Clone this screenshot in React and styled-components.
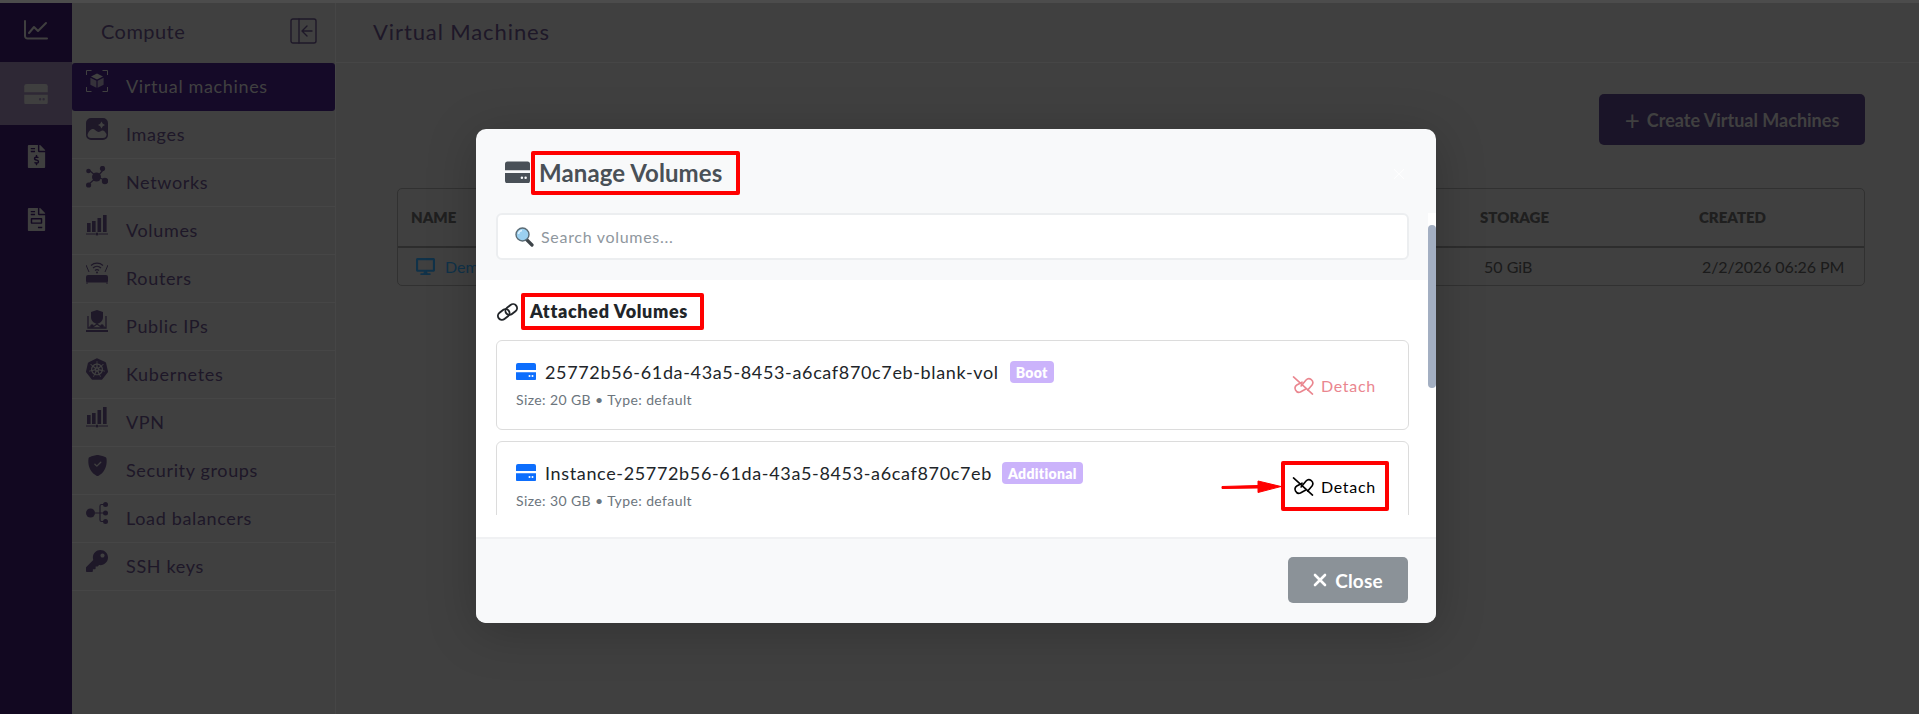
import React from "react";
import styled, { createGlobalStyle } from "styled-components";
import { BsShieldFillCheck, BsXLg } from "react-icons/bs";
import { FaFileInvoice, FaFileInvoiceDollar, FaKey, FaDesktop } from "react-icons/fa";
import { SiKubernetes } from "react-icons/si";

const FONT = `Lato, "Noto Sans", sans-serif`;

const Global = createGlobalStyle`
  html, body { margin: 0; padding: 0; height: 100%; background: #4c4c4c; overflow: hidden; }
  #root { height: 100%; }
  * { box-sizing: border-box; }
  body { font-family: ${FONT}; }
`;

const Page = styled.div`
  display: flex; flex-direction: column; height: 714px; width: 1919px;
`;
const TopStrip = styled.div`height: 3px; flex: none; background: #4c4c4c;`;
const Shell = styled.div`position: relative; flex: 1; display: flex; background: #b7b7b7; overflow: hidden;`;
const Rail = styled.nav`
  width: 72px; flex: none; background: #36195f; display: flex; flex-direction: column; color: #b4b4b4;
`;
const RailItem = styled.div`
  height: ${p => (p.$first ? 59 : 63)}px; padding-bottom: ${p => (p.$first ? 6 : 0)}px;
  display: flex; align-items: center; justify-content: center;
  background: ${p => (p.$active ? "#857299" : "transparent")};
`;
const SubNav = styled.aside`width: 264px; flex: none; border-right: 1px solid #c8c8c8; display: flex; flex-direction: column;`;
const SubHead = styled.div`
  height: 60px; flex: none; display: flex; align-items: center; justify-content: space-between;
  padding: 0 18px 4px 29px; font-size: 20px; color: #574574;
  letter-spacing: .45px;
`;
const NavItem = styled.a`
  height: 48px; flex: none; display: flex; gap: 18px; padding: 7px 0 0 14px; font-size: 18px; letter-spacing: .65px;
  color: ${p => (p.$active ? "#b8b8b8" : "#574574")};
  background: ${p => (p.$active ? "#3c1d74" : "transparent")};
  border-radius: ${p => (p.$active ? "3px" : 0)};
  border-bottom: 1px solid ${p => (p.$active ? "transparent" : "#c8c8c8")};
`;
const NavIcon = styled.span`width: 22px; height: 22px; flex: none; display: flex; align-items: center; justify-content: center;`;
const NavLabel = styled.span`line-height: 28px; margin-top: 2px;`;
const Main = styled.main`flex: 1; display: flex; flex-direction: column; min-width: 0;`;
const MainHead = styled.header`
  height: 60px; flex: none; display: flex; align-items: center; padding: 0 0 3px 37px;
  font-size: 22px; color: #574574; border-bottom: 1px solid #c8c8c8; letter-spacing: .9px;
`;
const MainBody = styled.div`padding: 31px 54px 0 61px; display: flex; flex-direction: column;`;
const Toolbar = styled.div`display: flex; justify-content: flex-end; margin-bottom: 43px;`;
const CreateBtn = styled.button`
  width: 266px; height: 51px; border: 0; border-radius: 5px; background: #4c3a72; color: #b8b8b8;
  font: 700 18px ${FONT}; display: flex; align-items: center; justify-content: center; gap: 7px; padding: 0;
`;
const Plus = styled.span`font-size: 26px; font-weight: 400; line-height: 1;`;
const Table = styled.div`border: 1px solid #8c8c8c; border-radius: 5px; font-size: 16px; color: #4e4e4e;`;
const HeadRow = styled.div`
  height: 59px; display: flex; align-items: center; border-bottom: 2px solid #808080; padding-bottom: 2px;
  font-size: 15px; font-weight: 800; letter-spacing: 1px; color: #5a5a5a;
`;
const Cell = styled.div`width: ${p => p.$w}px; padding-left: ${p => p.$pl || 0}px; display: flex; align-items: center; gap: 10px; letter-spacing: ${p => p.$ls || 0}px;`;
const BodyRow = styled.div`height: 37px; display: flex; align-items: center;`;
const DemoLink = styled.span`color: #2f8fd0;`;

const Overlay = styled.div`position: absolute; inset: 0; background: rgba(0,0,0,.65); padding: 126px 483px 0 476px;`;
const Modal = styled.section`
  width: 960px; height: 494px; border-radius: 10px; overflow: hidden; background: #f8f9fa;
  box-shadow: 0 8px 50px rgba(0,0,0,.22); display: flex; flex-direction: column;
`;
const ModalHead = styled.div`height: 84px; flex: none; display: flex; align-items: flex-start; padding: 22px 0 0 29px; gap: 1px; position: relative;`;
const HeadIcon = styled.span`display: flex; color: #495057; margin-top: 10px;`;
const Marked = styled.span`
  display: inline-flex; align-items: center; border: 4px solid #ff0000; border-radius: 2px;
`;
const Title = styled(Marked)`height: 44px; width: 209px; padding-left: 4px; padding-bottom: 1px; font-size: 24px; font-weight: 700; color: #495057; letter-spacing: .1px; white-space: nowrap;`;
const CloseX = styled.span`position: absolute; top: 38px; right: 30px; color: #fff; display: flex;`;
const Scroller = styled.div`flex: 1; display: flex; min-height: 0;`;
const Content = styled.div`flex: 1; display: flex; flex-direction: column; min-width: 0;`;
const SearchBar = styled.div`height: 67px; flex: none; padding: 0 19px 0 20px;`;
const SearchBox = styled.div`
  height: 47px; background: #fff; border: 2px solid #eceef0; border-radius: 6px; display: flex; align-items: center;
  padding-left: 17px; gap: 7px; font-size: 16px; color: #8f979e; letter-spacing: .7px;
`;
const Body = styled.div`flex: 1; background: #fff; padding: 13px 19px 22px 20px; display: flex; flex-direction: column; min-height: 0;`;
const SectionRow = styled.div`display: flex; align-items: center; gap: 2px; margin-bottom: 10px; flex: none; color: #212529;`;
const SectionTitle = styled(Marked)`width: 183px; height: 37px; padding-left: 5px; padding-bottom: 2px; font-size: 18px; font-weight: 800; color: #212529; letter-spacing: .65px; white-space: nowrap;`;
const List = styled.div`flex: 1; overflow: hidden; display: flex; flex-direction: column; gap: 11px; min-height: 0;`;
const Card = styled.article`
  height: 90px; flex: none; border: 1px solid #dcdcdc; border-radius: 6px; display: flex; align-items: center;
  justify-content: space-between; padding: 0 19px 0 19px;
`;
const CardMain = styled.div`display: flex; flex-direction: column; gap: 7px; margin-top: -2px;`;
const NameRow = styled.div`display: flex; align-items: center; height: 24px;`;
const NameIcon = styled.span`display: flex; color: #0d6efd; margin-right: 9px; margin-top: -2px;`;
const Name = styled.span`font-size: 18px; color: #212529; letter-spacing: .65px; white-space: nowrap; margin-top: -1px;`;
const Badge = styled.span`
  margin-left: ${p => p.$ml}px; height: 22px; padding: 0 6px; border-radius: 4px; background: #cbb3fb; color: #fff; font-size: 14px; font-weight: 800;
  display: inline-flex; align-items: center; letter-spacing: .3px;
`;
const Meta = styled.div`font-size: 14px; color: #6c757d; letter-spacing: .4px;`;
const Detach = styled.button`
  width: 108px; height: 50px; flex: none; padding: 0 0 0 7px; background: #fff; font: 400 16px ${FONT}; letter-spacing: .7px;
  border: 4px solid ${p => (p.$marked ? "#ff0000" : "transparent")}; border-radius: 2px;
  color: ${p => (p.$marked ? "#000" : "#ea868f")}; display: flex; align-items: center; gap: 7px; position: relative;
`;
const Arrow = styled.svg`position: absolute; left: -65px; top: 15px;`;
const Track = styled.div`width: 8px; flex: none; background: #fff;`;
const Thumb = styled.div`width: 8px; height: 163px; margin-top: 12px; border-radius: 4px; background: #a3afc2;`;
const Footer = styled.footer`
  height: 86px; flex: none; background: #f8f9fa; border-top: 2px solid #f0f1f3; display: flex; align-items: center; justify-content: flex-end; padding: 0 28px 2px 0;
`;
const CloseBtn = styled.button`
  width: 120px; height: 46px; border: 0; border-radius: 5px; background: #8b9298; color: #fff; font: 700 19px ${FONT};
  display: flex; align-items: center; justify-content: center; gap: 8px; padding: 0; letter-spacing: .2px;
`;

const Glyph = ({ children, w = 22, h = 22, box = "0 0 22 22" }) => (
  <svg width={w} height={h} viewBox={box} fill="currentColor">{children}</svg>
);
const HddIcon = ({ w, h, split = 1.4 }) => (
  <svg width={w} height={h} viewBox="0 0 20 17" fill="currentColor">
    <path d={`M2 0h16a2 2 0 0 1 2 2v${6.5 - split}H0V2a2 2 0 0 1 2-2z`} />
    <path fillRule="evenodd" d={`M0 ${8.5 + split / 2}h20v6.300a2 2 0 0 1-2 2H2a2 2 0 0 1-2-2zM13.500 12a1 1 0 1 0 0 2 1 1 0 0 0 0-2zM16.500 12a1 1 0 1 0 0 2 1 1 0 0 0 0-2z`} />
  </svg>
);
const LinkGlyph = ({ w, h, sw = 1.9 }) => (
  <svg width={w} height={h} viewBox="0 0 23 20" fill="none" stroke="currentColor" strokeWidth={sw} strokeLinecap="round">
    <rect x="1.500" y="8.500" width="12.500" height="8" rx="4" transform="rotate(-38 7.700 12.500)" />
    <rect x="9" y="3.500" width="12.500" height="8" rx="4" transform="rotate(-38 15.200 7.500)" />
  </svg>
);
const UnlinkGlyph = () => (
  <svg width="22" height="19" viewBox="0 0 23 20" fill="none" stroke="currentColor" strokeWidth="1.700" strokeLinecap="round">
    <path d="M10.500 6.500L5 9.500a4.200 4.200 0 0 0 3.800 7.400l5.200-3" />
    <path d="M9.500 10.500l5.200-6.300a4.100 4.100 0 0 1 6.300 5.200l-4.500 5.400" />
    <path d="M1.500 1l20 18" />
  </svg>
);
const CloseCross = () => (
  <svg width="14" height="14" viewBox="0 0 14 14" stroke="currentColor" strokeWidth="2.600" strokeLinecap="round">
    <path d="M2 2l10 10M12 2L2 12" />
  </svg>
);
const CubeIcon = () => (
  <Glyph>
    <path d="M.5 5V.5h5M16.500.5h5v4.500M21.500 17v4.500h-5M5.500 21.500h-5V17" fill="none" stroke="currentColor" strokeWidth="1" />
    <path d="M11 3.500l6 3-6 3-6-3z" /><path d="M4.400 7.800l6 3v7l-6-3zM17.600 7.800l-6 3v7l6-3z" opacity=".75" />
  </Glyph>
);
const ImageIcon = () => (
  <Glyph>
    <path fillRule="evenodd" d="M5 0h12a5 5 0 0 1 5 5v12a5 5 0 0 1-5 5H5a5 5 0 0 1-5-5V5a5 5 0 0 1 5-5zM1.500 17c1-4 3.500-6.500 6-6 2 .5 3 3 5 3 2-.5 3-2 4.500-1.500 1.500.4 2.500 2 3.500 3.500v1a3.500 3.500 0 0 1-3.500 3H5a3.500 3.500 0 0 1-3.500-3zM15.500 3.500l1.300 2.200 2.200 1.300-2.200 1.300-1.300 2.200-1.300-2.200-2.200-1.300 2.200-1.300z" />
  </Glyph>
);
const NetworkIcon = () => (
  <Glyph>
    <path d="M3 4l8 7m0 0l7-8M11 11l8 3M11 11l-8 7" stroke="currentColor" strokeWidth="1.200" />
    <circle cx="10.500" cy="11" r="4.500" /><circle cx="2.500" cy="5" r="2.300" /><circle cx="16.500" cy="2.500" r="2.600" /><circle cx="19" cy="15" r="3.200" /><circle cx="2.600" cy="19" r="2.600" />
  </Glyph>
);
const BarsIcon = () => (
  <Glyph>
    <rect x="1" y="9" width="3.600" height="9" /><rect x="6" y="7" width="3.600" height="11" /><rect x="11.500" y="4" width="3.600" height="14" /><rect x="17" y="1" width="3.600" height="17" />
    <path d="M0 20h9m4 0h9" stroke="currentColor" strokeWidth="1" /><circle cx="11" cy="20" r="1.600" />
  </Glyph>
);
const RouterIcon = () => (
  <Glyph>
    <rect x="0" y="13" width="22" height="7.500" rx="2" />
    <path d="M1 15v7M21 15v7" stroke="currentColor" strokeWidth="1" />
    <path d="M0 3l3 7M22 3l-3 7" stroke="currentColor" strokeWidth="1" fill="none" />
    <path d="M5 3.500a9 9 0 0 1 12 0M7 6a6 6 0 0 1 8 0M9 8.500a3 3 0 0 1 4 0" stroke="currentColor" strokeWidth="1.200" fill="none" />
    <circle cx="11" cy="10.500" r="1" />
  </Glyph>
);
const PublicIcon = () => (
  <Glyph>
    <path d="M11 0l6 2v5c0 4-3 6-6 7-3-1-6-3-6-7V2z" />
    <path d="M2 6v12h18V6" fill="none" stroke="currentColor" strokeWidth="1.300" />
    <path d="M0 20h22v2H0z" />
    <path d="M3 17h4l4-3 4 3h4" fill="none" stroke="currentColor" strokeWidth="1.100" />
    <circle cx="6" cy="16" r="1.800" /><circle cx="16" cy="16" r="1.800" />
  </Glyph>
);
const BalancerIcon = () => (
  <Glyph>
    <circle cx="4.500" cy="11" r="4.500" /><circle cx="19.500" cy="2.500" r="2.500" /><circle cx="19.500" cy="11" r="2.500" /><circle cx="19.500" cy="19.500" r="2.500" />
    <path d="M18 2.500h-2.500a1.500 1.500 0 0 0-1.500 1.500v14a1.500 1.500 0 0 0 1.500 1.500H18M9 11h9" fill="none" stroke="currentColor" strokeWidth="1.200" />
  </Glyph>
);
const LineChart = () => (
  <svg width="24" height="20" viewBox="0 0 24 20" fill="none" stroke="currentColor" strokeWidth="2" strokeLinecap="round" strokeLinejoin="round">
    <path d="M1 1v15a2.500 2.500 0 0 0 2.500 2.500H23" /><path d="M5 13l5-6 4 4 8-8" />
  </svg>
);
const PanelToggle = () => (
  <svg width="27" height="26" viewBox="0 0 27 26" fill="none" stroke="currentColor" strokeWidth="1.400" strokeLinecap="round" strokeLinejoin="round">
    <rect x="1" y="1" width="25" height="24" rx="2" /><path d="M9 1v24" /><path d="M22 13h-9M17 8l-5 5 5 5" />
  </svg>
);
const SearchEmoji = () => (
  <svg width="19" height="20" viewBox="0 0 19 20">
    <path d="M11 12l6 6" stroke="#3d4449" strokeWidth="3.200" strokeLinecap="round" />
    <circle cx="7.500" cy="7.500" r="6.500" fill="#9bd0f0" stroke="#5a6b75" strokeWidth="1.400" />
    <path d="M3.500 7a4 4 0 0 1 3.500-3.500" stroke="#dff3ff" strokeWidth="1.500" fill="none" />
  </svg>
);

const navItems = [
  ["Virtual machines", <CubeIcon />],
  ["Images", <ImageIcon />],
  ["Networks", <NetworkIcon />],
  ["Volumes", <BarsIcon />],
  ["Routers", <RouterIcon />],
  ["Public IPs", <PublicIcon />],
  ["Kubernetes", <SiKubernetes size={22} />],
  ["VPN", <BarsIcon />],
  ["Security groups", <BsShieldFillCheck size={21} />],
  ["Load balancers", <BalancerIcon />],
  ["SSH keys", <FaKey size={22} />],
];

const volumes = [
  { name: "25772b56-61da-43a5-8453-a6caf870c7eb-blank-vol", badge: "Boot", ml: 11, meta: "Size: 20 GB • Type: default" },
  { name: "Instance-25772b56-61da-43a5-8453-a6caf870c7eb", badge: "Additional", ml: 10, meta: "Size: 30 GB • Type: default", marked: true },
];

export default function App() {
  return (
    <Page>
      <Global />
      <TopStrip />
      <Shell>
        <Rail>
          <RailItem $first><LineChart /></RailItem>
          <RailItem $active><HddIcon w={24} h={20} /></RailItem>
          <RailItem><FaFileInvoiceDollar size={23} /></RailItem>
          <RailItem><FaFileInvoice size={23} /></RailItem>
        </Rail>
        <SubNav>
          <SubHead>Compute<PanelToggle /></SubHead>
          {navItems.map(([label, icon], i) => (
            <NavItem key={label} $active={i === 0}>
              <NavIcon>{icon}</NavIcon>
              <NavLabel>{label}</NavLabel>
            </NavItem>
          ))}
        </SubNav>
        <Main>
          <MainHead>Virtual Machines</MainHead>
          <MainBody>
            <Toolbar><CreateBtn><Plus>+</Plus> Create Virtual Machines</CreateBtn></Toolbar>
            <Table>
              <HeadRow>
                <Cell $w={1082} $pl={13}>NAME</Cell>
                <Cell $w={219}>STORAGE</Cell>
                <Cell $w={160}>CREATED</Cell>
              </HeadRow>
              <BodyRow>
                <Cell $w={1086} $pl={18}><FaDesktop size={19} color="#2f8fd0" /><DemoLink>Demo</DemoLink></Cell>
                <Cell $w={218}>50 GiB</Cell>
                <Cell $w={158} $ls={-0.1}>2/2/2026 06:26 PM</Cell>
              </BodyRow>
            </Table>
          </MainBody>
        </Main>
        <Overlay>
          <Modal>
            <ModalHead>
              <HeadIcon><HddIcon w={25} h={22} /></HeadIcon>
              <Title>Manage Volumes</Title>
              <CloseX><BsXLg size={14} /></CloseX>
            </ModalHead>
            <Scroller>
              <Content>
                <SearchBar>
                  <SearchBox><SearchEmoji />Search volumes...</SearchBox>
                </SearchBar>
                <Body>
                  <SectionRow><LinkGlyph w={23} h={20} /><SectionTitle>Attached Volumes</SectionTitle></SectionRow>
                  <List>
                    {volumes.map(v => (
                      <Card key={v.name}>
                        <CardMain>
                          <NameRow>
                            <NameIcon><HddIcon w={20} h={17} /></NameIcon>
                            <Name>{v.name}</Name>
                            <Badge $ml={v.ml}>{v.badge}</Badge>
                          </NameRow>
                          <Meta>{v.meta}</Meta>
                        </CardMain>
                        <Detach $marked={v.marked}>
                          {v.marked && (
                            <Arrow width="62" height="14" viewBox="0 0 62 14">
                              <path d="M2 6.500L38 5.500V1L61 6.500 38 12.500V8L2 8.500z" fill="#f00" stroke="#f00" strokeLinejoin="round" />
                            </Arrow>
                          )}
                          <UnlinkGlyph />Detach
                        </Detach>
                      </Card>
                    ))}
                  </List>
                </Body>
              </Content>
              <Track><Thumb /></Track>
            </Scroller>
            <Footer><CloseBtn><CloseCross />Close</CloseBtn></Footer>
          </Modal>
        </Overlay>
      </Shell>
    </Page>
  );
}
